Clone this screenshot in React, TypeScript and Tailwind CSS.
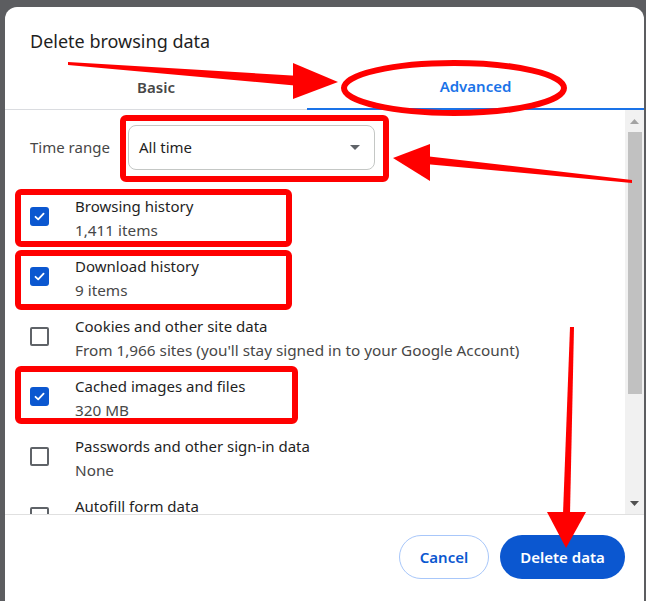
import React from "react";

const font = { fontFamily: '"Noto Sans", "Open Sans", sans-serif' };

function Check({ checked }: { checked: boolean }) {
  if (checked) {
    return (
      <div className="mt-[21px] w-[19px] h-[19px] rounded-[3px] bg-[#0b57d0] flex items-center justify-center shrink-0">
        <svg width="13" height="13" viewBox="0 0 13 13">
          <path d="M2.5 6.8 L5.2 9.4 L10.6 3.6" fill="none" stroke="white" strokeWidth="1.8" strokeLinecap="round" strokeLinejoin="round" />
        </svg>
      </div>
    );
  }
  return <div className="mt-[21px] w-[19px] h-[19px] rounded-[2px] border-2 border-[#5f6368] shrink-0" />;
}

function Row({ label, sub, checked }: { label: string; sub?: string; checked: boolean }) {
  return (
    <div className="h-[60px] shrink-0 flex items-start pl-[25px]">
      <Check checked={checked} />
      <div className="ml-[26px] pt-[8px] flex flex-col">
        <div className="text-[15px] leading-[24px] text-[#1f1f1f]">{label}</div>
        {sub ? (
          <div className="text-[15.3px] leading-[24px] text-[#474747]">{sub}</div>
        ) : (
          <div className="h-[24px]" />
        )}
      </div>
    </div>
  );
}

export default function App() {
  return (
    <div className="relative w-[646px] h-[601px] bg-[#5c5d60] overflow-hidden" style={font}>
      <div className="absolute inset-0 flex">
        <div className="w-[5px] shrink-0" />
        <div className="mt-[7px] w-[639px] h-[620px] bg-white rounded-t-[12px] flex flex-col">
          <div className="pl-[25px] pt-[22px] h-[58px] text-[18px] leading-[24px] text-[#1f1f1f]">Delete browsing data</div>
          <div className="flex h-[45px] border-b border-[#dadce0]">
            <div className="w-[302px] flex items-center justify-center text-[15px] font-semibold text-[#474747]">Basic</div>
            <div className="flex-1 flex items-center justify-center text-[15px] font-semibold text-[#1a73e8] border-b-2 border-[#1a73e8] -mb-px">Advanced</div>
          </div>
          <div className="h-[405px] flex border-b border-[#e0e0e0] overflow-hidden">
            <div className="flex-1 flex flex-col pt-[15px] overflow-hidden">
              <div className="flex items-center pl-[25px] h-[45px] shrink-0">
                <div className="text-[15px] text-[#474747] w-[98px]">Time range</div>
                <div className="w-[247px] h-[45px] rounded-[8px] border border-[#c4c7c5] flex items-center justify-between pl-[10px] pr-[14px]">
                  <span className="text-[15px] text-[#1f1f1f]">All time</span>
                  <svg width="10" height="5" viewBox="0 0 10 5"><path d="M0 0 L10 0 L5 5 Z" fill="#5f6368" /></svg>
                </div>
              </div>
              <div className="h-[16px] shrink-0" />
              <Row label="Browsing history" sub="1,411 items" checked />
              <Row label="Download history" sub="9 items" checked />
              <Row label="Cookies and other site data" sub="From 1,966 sites (you'll stay signed in to your Google Account)" checked={false} />
              <Row label="Cached images and files" sub="320 MB" checked />
              <Row label="Passwords and other sign-in data" sub="None" checked={false} />
              <Row label="Autofill form data" checked={false} />
            </div>
            <div className="w-[19px] bg-[#f1f1f1] flex flex-col items-center">
              <div className="h-[22px] flex items-center justify-center">
                <svg width="9" height="5" viewBox="0 0 9 5"><path d="M0 5 L9 5 L4.5 0 Z" fill="#a3a3a3" /></svg>
              </div>
              <div className="w-[14px] h-[262px] bg-[#c1c1c1]" />
              <div className="flex-1" />
              <div className="h-[22px] flex items-center justify-center">
                <svg width="9" height="5" viewBox="0 0 9 5"><path d="M0 0 L9 0 L4.5 5 Z" fill="#505050" /></svg>
              </div>
            </div>
          </div>
          <div className="flex justify-end gap-[11px] pr-[19px] pt-[20px]">
            <button className="h-[44px] w-[90px] rounded-full border border-[#a8c7fa] text-[15px] font-semibold text-[#0b57d0] bg-white">Cancel</button>
            <button className="h-[44px] w-[125px] rounded-full bg-[#0b57d0] text-[15px] font-semibold text-white">Delete data</button>
          </div>
        </div>
      </div>
      <svg className="absolute inset-0 pointer-events-none" width="646" height="601" viewBox="0 0 646 601">
        <g fill="#ff0000" stroke="none">
          <polygon points="68,62 300,76 300,86 68,65" />
          <polygon points="293,63 338,82 293,99" />
          <polygon points="393,158 430,144 430,181" />
          <polygon points="425,156 632,180 632,183 425,164" />
          <polygon points="570,327 574,327 570,514 563,514" />
          <polygon points="547,512 586,512 566,548" />
        </g>
        <g fill="none" stroke="#ff0000" strokeWidth="6">
          <ellipse cx="454" cy="88" rx="110" ry="25" />
          <rect x="123" y="118" width="263" height="61" rx="3" />
          <rect x="18" y="192" width="271" height="52" rx="3" />
          <rect x="18" y="253" width="271" height="54" rx="3" />
          <rect x="18" y="369" width="277" height="52" rx="3" />
        </g>
      </svg>
    </div>
  );
}
